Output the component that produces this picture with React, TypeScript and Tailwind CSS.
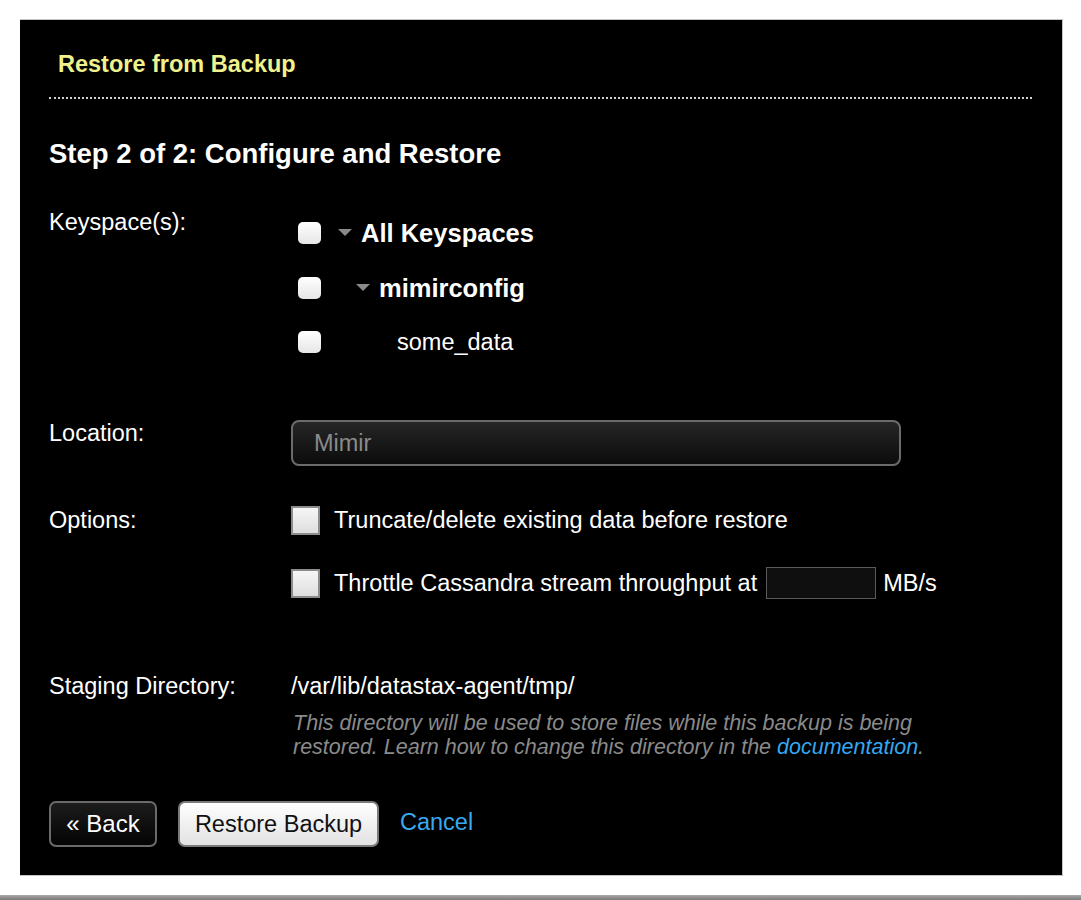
import { useState } from "react";

type Node = { name: string; level: number; parent: boolean };

const keyspaces: Node[] = [
  { name: "All Keyspaces", level: 0, parent: true },
  { name: "mimirconfig", level: 1, parent: true },
  { name: "some_data", level: 2, parent: false },
];

// indent per tree level, spelled out so tailwind picks them up
const indent = ["pl-[17px]", "pl-[35px]", "pl-[53px]"];

function Caret() {
  return (
    <svg width="14" height="8" viewBox="0 0 14 8" className="shrink-0">
      <path d="M0 0 L14 0 L7 7 Z" fill="#8a8a8a" />
    </svg>
  );
}

function TreeRow({ node }: { node: Node }) {
  const [checked, setChecked] = useState(false);
  return (
    <div className="flex h-[54.5px] items-center">
      <button
        onClick={() => setChecked(!checked)}
        className="ml-[7px] h-[22px] w-[23px] shrink-0 rounded-[5px] bg-gradient-to-b from-white to-[#e6e6e6]"
      />
      <div className={`flex items-center gap-[9px] ${indent[node.level]}`}>
        {node.parent ? <Caret /> : <span className="w-[14px]" />}
        <span
          className={
            node.parent
              ? "text-[25.5px] font-bold leading-[28px] text-white"
              : "text-[23.5px] leading-[28px] text-white"
          }
        >
          {node.name}
        </span>
      </div>
    </div>
  );
}

function SquareCheck() {
  return (
    <span className="h-[29px] w-[29px] shrink-0 border-2 border-[#8c8c8c] bg-gradient-to-b from-[#f6f6f6] to-[#dedede]" />
  );
}

function App() {
  return (
    <div className="min-h-[900px] bg-white font-['Liberation_Sans',Arial,sans-serif] text-[23.5px] leading-[28px]">
      <div className="pl-[20px] pt-[19px]">
        <div className="h-[857px] w-[1043px] border border-[#c4c4c4] border-l-0 bg-black">
          <h1 className="pl-[38px] pt-[30px] text-[23.5px] font-bold leading-[28px] text-[#eff18d]">
            Restore from Backup
          </h1>
          <div className="ml-[29px] mr-[30px] mt-[19px] border-t-2 border-dotted border-[#cfcfcf]" />

          <div className="pl-[29px]">
            <h2 className="mt-[39px] text-[27.5px] font-bold leading-[32px] text-white">
              Step 2 of 2: Configure and Restore
            </h2>

            <div className="mt-[36px] flex">
              <div className="mt-[2px] w-[242px] shrink-0 text-white">Keyspace(s):</div>
              <div className="flex flex-col">
                {keyspaces.map((k) => (
                  <TreeRow key={k.name} node={k} />
                ))}
              </div>
            </div>

            <div className="mt-[49px] flex">
              <div className="w-[242px] shrink-0 text-white">Location:</div>
              <div className="mt-[1px] flex h-[46px] w-[610px] items-center rounded-[8px] border-2 border-[#6b6b6b] bg-gradient-to-b from-[#262626] to-[#0c0c0c] pl-[21px] text-[#8a8a8a]">
                Mimir
              </div>
            </div>

            <div className="mt-[40px] flex">
              <div className="w-[242px] shrink-0 text-white">Options:</div>
              <div className="flex flex-col">
                <div className="flex h-[29px] items-center gap-[14px] text-white">
                  <SquareCheck />
                  <span>Truncate/delete existing data before restore</span>
                </div>
                <div className="mt-[34px] flex h-[29px] items-center gap-[14px] text-white">
                  <SquareCheck />
                  <span className="flex items-center">
                    Throttle Cassandra stream throughput at
                    <span className="ml-[9px] mr-[7px] inline-block h-[32px] w-[110px] border border-[#5a5a5a] bg-[#0f0f0f]" />
                    MB/s
                  </span>
                </div>
              </div>
            </div>

            <div className="mt-[74px] flex">
              <div className="w-[242px] shrink-0 text-white">Staging Directory:</div>
              <div>
                <div className="text-white">/var/lib/datastax-agent/tmp/</div>
                <p className="ml-[2px] mt-[11px] text-[21.5px] italic leading-[24px] text-[#8a8a8a]">
                  This directory will be used to store files while this backup is being
                  <br />
                  restored. Learn how to change this directory in the{" "}
                  <a className="text-[#35a7f0]">documentation</a>.
                </p>
              </div>
            </div>

            <div className="mt-[42px] flex items-center">
              <button className="h-[46px] w-[108px] rounded-[7px] border-2 border-[#6a6a6a] bg-gradient-to-b from-[#1c1c1c] to-[#050505] text-[24px] text-white">
                « Back
              </button>
              <button className="ml-[21px] h-[46px] w-[201px] rounded-[7px] border-2 border-[#7a7a7a] bg-gradient-to-b from-white to-[#e2e2e2] text-[#111]">
                Restore Backup
              </button>
              <a className="mb-[4px] ml-[21px] text-[#3aa8ef]">Cancel</a>
            </div>
          </div>
        </div>
      </div>
      <div className="mt-[19px] h-[5px] bg-gradient-to-b from-[#a8a8a8] to-[#7a7a7a]" />
    </div>
  );
}

export default App;
